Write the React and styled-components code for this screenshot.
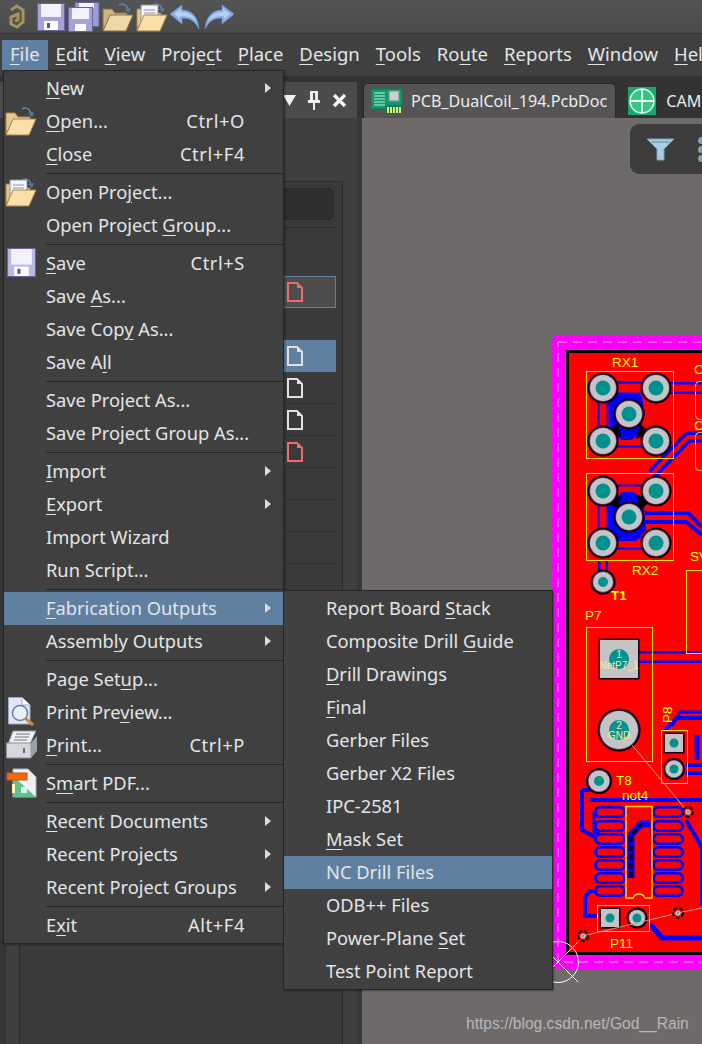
import styled, { createGlobalStyle } from 'styled-components';

const HILITE = '#5f80a1';
const MENU_BG = '#404040';
const TEXT = '#e2e5e8';

const GlobalStyle = createGlobalStyle`
  html, body { margin: 0; padding: 0; background: #3f3f3f; }
  * { box-sizing: border-box; }
`;

const menuBar = ['&File', '&Edit', '&View', 'Proje&ct', '&Place', '&Design', '&Tools', 'Ro&ute', '&Reports', '&Window', '&Help'];

const fileMenu = [
  { label: '&New', arrow: true },
  { label: '&Open...', icon: 'open', shortcut: 'Ctrl+O' },
  { label: '&Close', shortcut: 'Ctrl+F4' },
  'sep',
  { label: 'Open Pro&ject...', icon: 'project' },
  { label: 'Open Project &Group...' },
  'sep',
  { label: '&Save', icon: 'save', shortcut: 'Ctrl+S' },
  { label: 'Save &As...' },
  { label: 'Save Cop&y As...' },
  { label: 'Save A&ll' },
  'sep',
  { label: 'Save Project As...' },
  { label: 'Save Project Group As...' },
  'sep',
  { label: '&Import', arrow: true },
  { label: '&Export', arrow: true },
  { label: 'Import Wizard' },
  { label: 'Run Script...' },
  'sep',
  { label: '&Fabrication Outputs', arrow: true, active: true },
  { label: 'Assemb&ly Outputs', arrow: true },
  'sep',
  { label: 'Page Set&up...' },
  { label: 'Print Pre&view...', icon: 'preview' },
  { label: '&Print...', icon: 'print', shortcut: 'Ctrl+P' },
  'sep',
  { label: 'S&mart PDF...', icon: 'pdf' },
  'sep',
  { label: '&Recent Documents', arrow: true },
  { label: 'Recent Projects', arrow: true },
  { label: 'Recent Project Groups', arrow: true },
  'sep',
  { label: 'E&xit', shortcut: 'Alt+F4' },
];

const fabMenu = [
  { label: 'Report Board &Stack' },
  { label: 'Composite Drill &Guide' },
  { label: '&Drill Drawings' },
  { label: '&Final' },
  { label: 'Gerber Files' },
  { label: 'Gerber X2 Files' },
  { label: 'IPC-2581' },
  { label: '&Mask Set' },
  { label: 'NC Drill Files', active: true },
  { label: 'ODB++ Files' },
  { label: 'Power-Plane &Set' },
  { label: 'Test Point Report' },
];

const panelRows = [
  { kind: 'outlined', tone: 'red' },
  { kind: 'blank' },
  { kind: 'selected', tone: 'white' },
  { kind: 'plain', tone: 'white' },
  { kind: 'plain', tone: 'white' },
  { kind: 'plain', tone: 'red' },
  { kind: 'plain' },
  { kind: 'plain' },
  { kind: 'plain' },
];

function Mnemonic({ text }) {
  const [before, after] = text.split('&');
  if (after === undefined) return text;
  return (
    <>
      {before}
      <Key>{after[0]}</Key>
      {after.slice(1)}
    </>
  );
}

/* ---------- icons ---------- */

function AltiumLogo() {
  return (
    <svg width="16" height="25" viewBox="0 0 16 25">
      <path d="M2 6 L8 2 L14 6 V18 L8 23 L2 20 V13 L9 10 V16 L6 17" fill="none" stroke="#a8925e" strokeWidth="3" />
    </svg>
  );
}

function SaveIcon({ size = 28, light }) {
  return (
    <svg width={size} height={size} viewBox="0 0 28 28">
      <rect x="0.5" y="0.5" width="27" height="27" fill={light ? '#b9b9e6' : '#a3a3d8'} stroke="#6464a0" />
      <rect x="4" y="1" width="20" height={light ? 15 : 13} fill="#f3f3ff" />
      <rect x="7" y="18" width="14" height="9" fill="#fff" />
      <rect x="10" y="20" width="3" height="5" fill="#5b5b88" />
    </svg>
  );
}

function SaveAllIcon() {
  return (
    <svg width="32" height="30" viewBox="0 0 32 30">
      <rect x="7" y="0.5" width="24" height="24" fill="#9c9cd2" stroke="#6464a0" />
      <rect x="11" y="1" width="15" height="5" fill="#f3f3ff" />
      <rect x="0.5" y="5.5" width="24" height="24" fill="#a3a3d8" stroke="#6464a0" />
      <rect x="4" y="6" width="17" height="11" fill="#f3f3ff" />
      <rect x="7" y="22" width="11" height="7" fill="#fff" />
    </svg>
  );
}

function OpenIcon({ doc, dim, width = 32, height = 30 }) {
  const edge = dim ? '#857048' : '#a6854d';
  const back = dim ? '#cdb381' : '#e6c68b';
  const front = dim ? '#f0d8a6' : '#fbdfa8';
  return (
    <svg width={width} height={height} viewBox="0 0 32 30">
      <path d="M17 3 C21 1 24 2 26 7" fill="none" stroke="#5f86a8" strokeWidth="1.6" />
      <path d="M23 7 L29 6 L27 11 Z" fill="#4f7ba0" />
      <path d="M1 28 V7 H10 L13 11 H25 V15 H8 L1 28 Z" fill={back} stroke={edge} />
      {doc && (
        <>
          <rect x="5" y="3" width="17" height="19" fill="#f4f6fb" stroke="#8b95a8" />
          <path d="M8 8 H19 M8 11 H19 M8 14 H19 M8 17 H19" stroke="#8590c0" strokeWidth="1" />
        </>
      )}
      <path d="M1 29 L8 13 H31 L24 29 Z" fill={front} stroke={edge} />
    </svg>
  );
}

function ArrowIcon({ flip }) {
  return (
    <svg width="30" height="25" viewBox="0 0 30 25" style={flip ? { transform: 'scaleX(-1)' } : undefined}>
      <path d="M0 10 L12 1 V6 C21 6 28 12 29 25 C25 17 20 14 12 14 V20 Z" fill="#8bb0e8" stroke="#6f95d6" strokeWidth="0.6" />
      <path d="M4 10 L11 5 V8 C18 8 23 11 26 17 C21 13 17 12 10 12 V15 Z" fill="#b6d0f4" />
    </svg>
  );
}

function PreviewIcon() {
  return (
    <svg width="27" height="30" viewBox="0 0 27 30">
      <path d="M0.5 0.5 H14 L22 8 V27 H0.5 Z" fill="#dfe7f6" stroke="#9aa9c6" />
      <path d="M14 0.5 V8 H22" fill="#fff" stroke="#9aa9c6" />
      <circle cx="12" cy="16" r="7.5" fill="#e8f2fb" stroke="#6e7f8d" strokeWidth="1.5" />
      <path d="M17 21 L25 28" stroke="#c98b46" strokeWidth="3" />
    </svg>
  );
}

function PrintIcon() {
  return (
    <svg width="31" height="29" viewBox="0 0 31 29">
      <path d="M7 1 H30 L24 14 H2 Z" fill="#eceff3" stroke="#8d9198" />
      <path d="M10 4 H24 M9 7 H23 M8 10 H21" stroke="#777" strokeWidth="1" />
      <path d="M0.5 13 H25 V28 H0.5 Z" fill="#d4d8de" stroke="#8d9198" />
      <path d="M25 13 L31 6 V21 L25 28 Z" fill="#9ba1aa" />
      <rect x="17" y="18" width="2" height="5" fill="#666" />
    </svg>
  );
}

function PdfIcon() {
  return (
    <svg width="31" height="30" viewBox="0 0 31 30">
      <path d="M7 1 H22 L30 9 V29 H7 Z" fill="#eef2f6" stroke="#aab3c0" />
      <path d="M7 8 L30 29 H7 Z" fill="#5fc28d" />
      <rect x="1" y="5" width="20" height="7" fill="#f26a00" stroke="#c4522c" />
      <rect x="6" y="16" width="3" height="9" fill="#f8f8b0" />
      <rect x="15" y="19" width="6" height="6" fill="#dff0e6" />
    </svg>
  );
}

const menuIcons = {
  open: <OpenIcon />,
  project: <OpenIcon doc />,
  save: <SaveIcon size={29} light />,
  preview: <PreviewIcon />,
  print: <PrintIcon />,
  pdf: <PdfIcon />,
};

function FileGlyph({ tone }) {
  const color = tone === 'red' ? '#ee6b6e' : '#e0e0e0';
  return (
    <svg width="16" height="20" viewBox="0 0 16 20">
      <path d="M1 1 H10 L15 6 V19 H1 Z" fill="none" stroke={color} strokeWidth="2" />
      <path d="M10 1 L15 6 H10 Z" fill={color} />
    </svg>
  );
}

function PcbTabIcon() {
  return (
    <svg width="32" height="26" viewBox="0 0 32 26">
      <rect x="0" y="1" width="31" height="20" fill="#0e9a6c" stroke="#0b7f58" />
      <path d="M3 5 H14 M3 8 H14 M3 11 H14 M3 14 H14 M3 17 H14" stroke="#c8f0dc" strokeWidth="1" />
      <rect x="18" y="3" width="10" height="10" fill="#c8d2cc" stroke="#889" />
      <rect x="14" y="17" width="17" height="9" fill="#0a7a56" />
      <path d="M17 19 V25 M20 19 V25 M23 19 V25 M26 19 V25 M29 19 V25" stroke="#e8e86a" strokeWidth="2" />
    </svg>
  );
}

function CamTabIcon() {
  return (
    <svg width="28" height="28" viewBox="0 0 28 28">
      <rect width="28" height="28" fill="#17a870" />
      <circle cx="14" cy="14" r="12" fill="#35c585" stroke="#e4f7ee" strokeWidth="1.5" />
      <path d="M14 2 V26 M2 14 H26" stroke="#f4fff9" strokeWidth="1.8" />
    </svg>
  );
}

function FilterIcon() {
  return (
    <svg width="27" height="23" viewBox="0 0 27 23">
      <path d="M0 1 H27 L17 11 V22 H10 V11 Z" fill="#a9cde2" stroke="#7ba4c0" />
      <path d="M4 4 H23" stroke="#5f8aa8" strokeWidth="1" />
    </svg>
  );
}

/* ---------- pcb drawing, in page coordinates ---------- */

function Pad({ x, y, r = 13, hole = 7.5 }) {
  return (
    <g>
      <circle cx={x} cy={y} r={r + 2.6} fill="#000" />
      <circle cx={x} cy={y} r={r + 0.8} fill="#80207e" />
      <circle cx={x} cy={y} r={r} fill="#c4c4c4" />
      <circle cx={x} cy={y} r={hole} fill="#009090" />
    </g>
  );
}

function SquarePad({ x, y, half, hole }) {
  return (
    <g>
      <rect x={x - half - 1.5} y={y - half - 1.5} width={half * 2 + 3} height={half * 2 + 3} fill="#1a001a" />
      <rect x={x - half} y={y - half} width={half * 2} height={half * 2} fill="#c4c4c4" />
      <circle cx={x} cy={y} r={hole} fill="#009090" />
    </g>
  );
}

function Via({ x, y }) {
  return (
    <g>
      <circle cx={x} cy={y} r="5" fill="none" stroke="#000" strokeWidth="2" strokeDasharray="4 2" />
      <circle cx={x} cy={y} r="2.6" fill="#c4c4c4" />
      <circle cx={x} cy={y} r="1" fill="#777" />
    </g>
  );
}

function Band({ d, outer = 14, inner = 9 }) {
  return (
    <g fill="none" strokeLinejoin="round">
      <path d={d} stroke="#0000ff" strokeWidth={outer} />
      <path d={d} stroke="#ff0000" strokeWidth={inner} />
    </g>
  );
}

const Trace = ({ d, w = 4 }) => <path d={d} fill="none" stroke="#0000ff" strokeWidth={w} strokeLinejoin="round" />;

const soicRows = [812, 826, 839, 852, 865, 878, 891];

function PcbDrawing() {
  return (
    <BoardSvg viewBox="362 118 340 926" width="340" height="926">
      <rect x="552" y="335" width="200" height="634" rx="6" fill="#ff00ff" />
      <rect x="558" y="342" width="200" height="620" fill="none" stroke="#e6b8e6" strokeDasharray="9 6" />
      <rect x="566" y="350" width="200" height="605" fill="#000" />
      <rect x="569" y="353" width="200" height="599" fill="#ff0000" />

      {/* RX1 */}
      <Band d="M603 388 H656" outer={13} inner={9} />
      <Band d="M603 441 H656" outer={13} inner={9} />
      <Band d="M603 388 V441" outer={11} inner={7} />
      <path d="M608 400 C612 392 636 390 642 397 L645 414 L640 430 L632 440 H622 L610 432 Z" fill="#0000ff" />
      <path d="M609 428 L622 438 L618 424 Z M636 439 L650 432 L640 424 Z" fill="#000" />
      <Band d="M656 388 H702" outer={12} inner={7} />
      <Band d="M652 474 L688 437 H702" outer={11} inner={4} />

      {/* RX2 */}
      <Band d="M603 491 H656" outer={13} inner={9} />
      <Band d="M603 543 H656" outer={13} inner={9} />
      <Band d="M603 491 V543" outer={11} inner={7} />
      <path d="M622 492 H634 L644 505 L646 530 L636 541 H618 L608 532 V506 Z" fill="#0000ff" />
      <path d="M610 504 L622 494 L618 508 Z M636 494 L650 502 L640 510 Z" fill="#000" />
      <Trace d="M645 513 H688 L702 527" />
      <Trace d="M645 522 H686 L702 535" />
      <Band d="M603 561 V582" outer={10} inner={5} />

      {/* P7, P8 and the traces on their right */}
      <Band d="M636 657 H702" outer={12} inner={7} />
      <Trace d="M665 730 L677 718 H702" />
      <Trace d="M672 726 L680 712 H702" w="3" />
      <Trace d="M686 765 H702" />
      <Trace d="M686 773 H702" />
      <Trace d="M697 735 V760" w="5" />

      {/* soic footprint with its fan-out */}
      <Trace d="M590 800 H702" w="4" />
      <Trace d="M582 790 H600 M582 790 V830 L597 838" w="4" />
      <Trace d="M594 812 V832 L610 838" w="3" />
      <Trace d="M610 891 H590 L585 897 V916 H597" w="4" />
      <Trace d="M650 924 L662 938 H702" w="5" />
      <Trace d="M686 820 L702 848 V905" w="4" />
      {soicRows.map((y) => (
        <g key={y}>
          <rect x="594" y={y - 6} width="32" height="12" rx="6" fill="#0000ff" />
          <rect x="597" y={y - 3.5} width="26" height="7" rx="3.5" fill="#ff0000" />
          <rect x="652" y={y - 6} width="32" height="12" rx="6" fill="#0000ff" />
          <rect x="655" y={y - 3.5} width="26" height="7" rx="3.5" fill="#ff0000" />
        </g>
      ))}
      <path d="M631 878 V835 L641 824 H650" fill="none" stroke="#0000ff" strokeWidth="7" />
      <path d="M631 878 V835 L641 824" fill="none" stroke="#000" strokeWidth="3" strokeDasharray="6 3" />
      <path d="M652 822 V836 M652 850 V868" stroke="#0000ff" strokeWidth="3" />

      {/* pads */}
      <Pad x={603} y={388} />
      <Pad x={656} y={388} />
      <Pad x={629} y={414} />
      <Pad x={603} y={441} />
      <Pad x={656} y={441} />
      <Pad x={603} y={491} />
      <Pad x={656} y={491} />
      <Pad x={629} y={517} />
      <Pad x={603} y={543} />
      <Pad x={656} y={543} />
      <Pad x={603} y={582} r={10} hole={5} />
      <SquarePad x={619} y={659} half={19} hole={10} />
      <Pad x={619} y={730} r={19} hole={10} />
      <Pad x={599} y={781} r={10.5} hole={5} />
      <SquarePad x={674} y={743} half={9} hole={4.5} />
      <Pad x={674} y={769} r={8.5} hole={4.5} />
      <SquarePad x={610} y={918} half={9} hole={4.5} />
      <Pad x={637} y={918} r={8} hole={4.5} />

      {/* ratsnest */}
      <path d="M632 745 L688 812 M583 936 L678 913 L702 908 M678 800 L688 812" stroke="#b0a878" strokeWidth="1" fill="none" />
      <Via x={688} y={812} />
      <Via x={583} y={936} />
      <Via x={678} y={913} />

      {/* overlay */}
      <g fill="none" stroke="#ffe000" strokeWidth="1">
        <rect x="586.5" y="371.5" width="87" height="87" />
        <rect x="586.5" y="473.5" width="87" height="87" />
        <rect x="686.5" y="570.5" width="40" height="83" />
        <rect x="695.5" y="381.5" width="40" height="38" rx="4" />
        <rect x="695.5" y="432.5" width="40" height="38" rx="4" />
        <rect x="586.5" y="627.5" width="66" height="134" />
        <rect x="661.5" y="730.5" width="26" height="53" />
        <rect x="597.5" y="905.5" width="52" height="26" />
      </g>
      <path d="M626 898 V806.5 H652 V898 H645 A6.5 6.5 0 0 0 633 898 Z" fill="none" stroke="#ffdc00" strokeWidth="1.5" />
      <g fill="#ffff00">
        <PcbText x={612} y={367}>RX1</PcbText>
        <PcbText x={632} y={575}>RX2</PcbText>
        <PcbText x={690} y={561}>SV</PcbText>
        <PcbText x={694} y={374}>C</PcbText>
        <PcbText x={694} y={430}>C</PcbText>
        <PcbText x={611} y={600} $bold>T1</PcbText>
        <PcbText x={585} y={620}>P7</PcbText>
        <PcbText x={616} y={785}>T8</PcbText>
        <PcbText x={622} y={800}>not4</PcbText>
        <PcbText x={610} y={948}>P11</PcbText>
        <PcbText x={672} y={723} transform="rotate(-90 672 723)">P8</PcbText>
      </g>
      <g fill="#ffeb96" textAnchor="middle">
        <PadText x={619} y={658}>1</PadText>
        <PadText x={619} y={669}>NetP7_1</PadText>
        <PadText x={619} y={729}>2</PadText>
        <PadText x={619} y={739}>GND</PadText>
      </g>

      {/* origin marker */}
      <g fill="none" stroke="#ffffff" strokeWidth="1">
        <circle cx="558" cy="962" r="20.5" />
        <path d="M538 982 L578 942 M538 942 L578 982" />
      </g>
    </BoardSvg>
  );
}

/* ---------- the page ---------- */

function MenuRows({ items }) {
  return items.map((item, i) =>
    item === 'sep' ? (
      <Separator key={i} />
    ) : (
      <MenuRow key={item.label} $active={item.active}>
        <IconSlot>{item.icon && menuIcons[item.icon]}</IconSlot>
        <RowLabel>
          <Mnemonic text={item.label} />
        </RowLabel>
        {item.shortcut && <Shortcut>{item.shortcut}</Shortcut>}
        <ArrowSlot>{item.arrow && <Caret />}</ArrowSlot>
      </MenuRow>
    ),
  );
}

export default function App() {
  return (
    <Page>
      <GlobalStyle />
      <Toolbar>
        <ToolSlot><AltiumLogo /></ToolSlot>
        <ToolSlot><SaveIcon /></ToolSlot>
        <ToolSlot><SaveAllIcon /></ToolSlot>
        <ToolSlot><OpenIcon dim /></ToolSlot>
        <ToolSlot><OpenIcon doc /></ToolSlot>
        <ToolSlot><ArrowIcon /></ToolSlot>
        <ToolSlot><ArrowIcon flip /></ToolSlot>
      </Toolbar>
      <MenuStrip>
        {menuBar.map((name, i) => (
          <MenuTitle key={name} $open={i === 0}>
            <Mnemonic text={name} />
          </MenuTitle>
        ))}
      </MenuStrip>
      <Main>
        <SideColumn>
          <PanelHeader>
            <svg width="13" height="11" viewBox="0 0 13 11"><path d="M0 0 H13 L6.5 11 Z" fill="#f2f2f2" /></svg>
            <svg width="12" height="19" viewBox="0 0 12 19"><path d="M2 0 H10 V9 H12 V12 H7 V19 H5 V12 H0 V9 H2 Z M5 2 V9 H7 V2 Z" fill="#f2f2f2" fillRule="evenodd" /></svg>
            <svg width="15" height="15" viewBox="0 0 15 15"><path d="M2 2 L13 13 M13 2 L2 13" stroke="#f6f6f6" strokeWidth="3.4" /></svg>
          </PanelHeader>
          <PanelArea>
            <PanelBody>
              <SearchBox />
              <PanelRule />
              <RowList>
                {panelRows.map((row, i) => (
                  <PanelRow key={i} $kind={row.kind}>
                    {row.tone && <FileGlyph tone={row.tone} />}
                  </PanelRow>
                ))}
              </RowList>
            </PanelBody>
          </PanelArea>
        </SideColumn>
        <DocColumn>
          <TabStrip>
            <Tab $current>
              <PcbTabIcon />
              <TabName>PCB_DualCoil_194.PcbDoc</TabName>
            </Tab>
            <Tab>
              <CamTabIcon />
              <TabName>CAM</TabName>
            </Tab>
          </TabStrip>
          <Workspace>
            <PcbDrawing />
            <FloatBar>
              <FilterIcon />
              <Dots>
                <i /><i /><i />
              </Dots>
            </FloatBar>
          </Workspace>
        </DocColumn>
      </Main>

      <FileMenu>
        <MenuRows items={fileMenu} />
      </FileMenu>
      <FabMenu>
        <MenuRows items={fabMenu} />
      </FabMenu>
      <Watermark>https://blog.csdn.net/God__Rain</Watermark>
    </Page>
  );
}

const Page = styled.div`
  position: relative;
  width: 702px;
  height: 1044px;
  overflow: hidden;
  display: flex;
  flex-direction: column;
  background: #3f3f3f;
  font-family: 'Noto Sans', 'Open Sans', sans-serif;
  color: ${TEXT};
`;

const Toolbar = styled.div`
  height: 34px;
  flex: none;
  display: flex;
  align-items: center;
  background: linear-gradient(#545454, #4a4a4a);
  border-bottom: 1px solid #333;
`;

const ToolSlot = styled.div`
  width: 33.7px;
  display: flex;
  justify-content: center;
  align-items: center;
`;

const MenuStrip = styled.div`
  height: 42px;
  flex: none;
  display: flex;
  align-items: flex-start;
  padding: 6px 0 0 2px;
  background: #404040;
`;

const MenuTitle = styled.div`
  height: 30px;
  padding: 0 8px;
  line-height: 28px;
  font-size: 18.5px;
  white-space: nowrap;
  background: ${(p) => (p.$open ? HILITE : 'transparent')};
`;

const Key = styled.span`
  text-decoration: underline;
  text-decoration-thickness: 1px;
  text-underline-offset: 3px;
`;

const Main = styled.div`
  flex: 1;
  min-height: 0;
  display: flex;
`;

const SideColumn = styled.div`
  width: 362px;
  flex: none;
  display: flex;
  flex-direction: column;
  padding-top: 6px;
  background: #333;
`;

const PanelHeader = styled.div`
  height: 36px;
  flex: none;
  margin-right: 5px;
  display: flex;
  align-items: center;
  justify-content: flex-end;
  gap: 12px;
  padding-right: 10px;
  background: #4b4b4b;
`;

const PanelArea = styled.div`
  flex: 1;
  padding: 63px 19px 0 19px;
  background: linear-gradient(90deg, #353535 6px, #3f3f3f 6px, #3f3f3f 357px, #383838 357px);
`;

const PanelBody = styled.div`
  height: 100%;
  padding: 6px 8px 0 8px;
  background: #3a3a3a;
  border: 1px solid #2b2b2b;
  border-bottom: none;
`;

const SearchBox = styled.div`
  height: 32px;
  margin-left: -8px;
  background: #2f2f2f;
  border: 1px solid #2a2a2a;
  border-radius: 6px;
`;

const PanelRule = styled.div`
  height: 1px;
  margin-top: 7px;
  background: #2b2b2b;
`;

const RowList = styled.div`
  display: flex;
  flex-direction: column;
  margin: 48px -2px 0 0;
`;

const PanelRow = styled.div`
  height: 32px;
  display: flex;
  align-items: center;
  justify-content: flex-end;
  padding-right: 33px;
  border-bottom: 1px solid ${(p) => (p.$kind === 'plain' ? '#303030' : 'transparent')};
  background: ${(p) => (p.$kind === 'selected' ? HILITE : p.$kind === 'outlined' ? '#4d4d4d' : 'transparent')};
  ${(p) => p.$kind === 'outlined' && `outline: 1px solid ${HILITE}; outline-offset: -1px;`}
`;

const DocColumn = styled.div`
  flex: 1;
  min-width: 0;
  display: flex;
  flex-direction: column;
`;

const TabStrip = styled.div`
  height: 42px;
  flex: none;
  display: flex;
  align-items: flex-end;
  gap: 12px;
  padding-left: 1px;
  background: #333;
`;

const Tab = styled.div`
  height: 35px;
  flex: none;
  display: flex;
  align-items: center;
  gap: ${(p) => (p.$current ? '8px' : '10px')};
  padding: ${(p) => (p.$current ? '0 8px 0 7px' : '0')};
  background: ${(p) => (p.$current ? '#555' : 'transparent')};
  border: ${(p) => (p.$current ? '1px solid #2a2a2a' : 'none')};
  border-bottom: none;
  border-radius: 5px 5px 0 0;
`;

const TabName = styled.span`
  font-size: 16.1px;
  white-space: nowrap;
  color: #ececec;
`;

const Workspace = styled.div`
  position: relative;
  flex: 1;
  min-height: 0;
  background: #6e6a6a;
`;

const BoardSvg = styled.svg`
  display: block;
`;

const PcbText = styled.text`
  font-family: 'Liberation Sans', Arial, sans-serif;
  font-size: 13.5px;
  font-weight: ${(p) => (p.$bold ? 700 : 400)};
`;

const PadText = styled.text`
  font-family: 'Liberation Sans', Arial, sans-serif;
  font-size: 10px;
`;

const FloatBar = styled.div`
  position: absolute;
  top: 6px;
  left: 268px;
  width: 120px;
  height: 50px;
  display: flex;
  align-items: center;
  gap: 24px;
  padding-left: 17px;
  background: #3c3c3c;
  border-radius: 9px;
`;

const Dots = styled.div`
  display: flex;
  flex-direction: column;
  gap: 2px;
  i {
    display: block;
    width: 7px;
    height: 7px;
    border-radius: 50%;
    background: #84a0ae;
  }
`;

const FileMenu = styled.div`
  position: absolute;
  left: 3px;
  top: 70px;
  width: 281px;
  padding: 1px 0;
  background: ${MENU_BG};
  border: 1px solid #262626;
  box-shadow: 1px 1px 2px rgba(0, 0, 0, 0.35);
`;

const FabMenu = styled(FileMenu)`
  left: 283px;
  top: 590px;
  width: 270px;
`;

const MenuRow = styled.div`
  height: 33px;
  display: flex;
  align-items: center;
  padding-bottom: 2px;
  font-size: 18.3px;
  white-space: nowrap;
  background: ${(p) => (p.$active ? HILITE : 'transparent')};
`;

const IconSlot = styled.div`
  width: 42px;
  flex: none;
  display: flex;
  justify-content: center;
  padding-right: 8px;
`;

const RowLabel = styled.span`
  flex: 1;
`;

const Shortcut = styled.span`
  flex: none;
  letter-spacing: 0.6px;
`;

const ArrowSlot = styled.div`
  width: 38px;
  flex: none;
  display: flex;
  justify-content: flex-end;
  padding-right: 12px;
`;

const Caret = styled.span`
  width: 0;
  height: 0;
  border-left: 6px solid #dcdcdc;
  border-top: 5.5px solid transparent;
  border-bottom: 5.5px solid transparent;
`;

const Separator = styled.div`
  height: 5px;
  margin-left: 42px;
  display: flex;
  align-items: center;
  &::after {
    content: '';
    flex: 1;
    height: 1px;
    background: #262626;
  }
`;

const Watermark = styled.div`
  position: absolute;
  left: 466px;
  top: 1014px;
  font-family: 'Liberation Sans', Arial, sans-serif;
  font-size: 15.6px;
  line-height: 20px;
  color: #b9b6b6;
`;
